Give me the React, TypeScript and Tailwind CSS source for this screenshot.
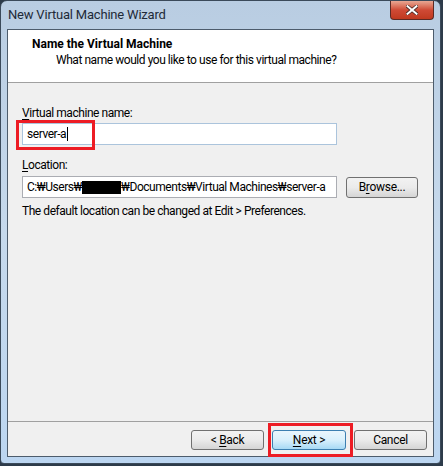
import React from "react"

const ui = { fontFamily: 'Roboto, "Noto Sans", sans-serif' }

function WinButton({ children, className = "" }: { children: React.ReactNode; className?: string }) {
    return (
        <div
            className={`flex items-center justify-center rounded-[3px] border border-[#707070] bg-gradient-to-b from-[#f2f2f2] via-[#ebebeb] to-[#d5d5d5] text-[12px] text-black tracking-[-0.3px] ${className}`}
        >
            {children}
        </div>
    )
}

export default function App() {
    return (
        <div className="w-[443px] h-[466px] overflow-hidden bg-[#2d3b4a]" style={ui}>
            {/* WINDOW FRAME */}
            <div className="w-[441px] h-[464px] rounded-t-[7px] rounded-b-[4px] border border-[#3b4a5a] bg-gradient-to-b from-[#b9cde2] via-[#c6d9ec] to-[#bcd6f1] flex flex-col px-[6px] pb-[6px]">
                {/* TITLE BAR */}
                <div className="h-[28px] flex items-start justify-between">
                    <span className="pl-[1px] pt-[6px] text-[13px] leading-[16px] text-[#1e2a38] tracking-[-0.2px]">
                        New Virtual Machine Wizard
                    </span>
                    <div className="w-[44px] h-[19px] rounded-b-[4px] border border-t-0 border-[#5b2a24] bg-gradient-to-b from-[#e8a793] via-[#cf4a35] to-[#c0391f] flex items-center justify-center">
                        <svg width="12" height="10" viewBox="0 0 12 10">
                            <path d="M1 1 L11 9 M11 1 L1 9" stroke="#4a2a25" strokeWidth="3.6" strokeLinecap="square" />
                            <path d="M1.5 1.2 L10.5 8.8 M10.5 1.2 L1.5 8.8" stroke="#ffffff" strokeWidth="2" strokeLinecap="square" />
                        </svg>
                    </div>
                </div>
                {/* CLIENT AREA */}
                <div className="flex-1 flex flex-col border border-[#4d5c6c] bg-[#f0f0f0]">
                    {/* HEADER */}
                    <div className="h-[53px] bg-white border-b border-[#a0a0a0] pl-[24px] pt-[6px]">
                        <p className="text-[12px] font-bold text-black leading-[16px]">Name the Virtual Machine</p>
                        <p className="pl-[24px] text-[12px] text-black leading-[17px] tracking-[-0.45px]">
                            What name would you like to use for this virtual machine?
                        </p>
                    </div>
                    {/* BODY */}
                    <div className="flex-1 flex flex-col pl-[14px] pt-[22px] text-[12px] text-black tracking-[-0.45px]">
                        <p className="leading-[16px]">
                            <span className="underline underline-offset-2">V</span>irtual machine name:
                        </p>
                        <div className="relative mt-[2px] w-[315px] h-[22px] border border-[#abc4dc] bg-white flex items-center pl-[4px]">
                            <span>server-a</span>
                            <span className="ml-[1px] w-px h-[14px] bg-black" />
                            <div className="absolute left-[-7px] top-[-4px] w-[79px] h-[30px] border-[3px] border-[#ed1c24]" />
                        </div>
                        <p className="mt-[12px] leading-[16px]">
                            <span className="underline underline-offset-2">L</span>ocation:
                        </p>
                        <div className="mt-[3px] flex items-center gap-[9px]">
                            <div className="w-[315px] h-[22px] border border-[#abadb3] bg-white flex items-center pl-[4px] whitespace-nowrap">
                                <span>C:₩Users₩</span>
                                <span className="w-[39px] h-[13px] bg-black" />
                                <span>₩Documents₩Virtual Machines₩server-a</span>
                            </div>
                            <WinButton className="w-[72px] h-[21px]">
                                <span>
                                    B<span className="underline underline-offset-2">r</span>owse...
                                </span>
                            </WinButton>
                        </div>
                        <p className="mt-[5px] leading-[16px]">The default location can be changed at Edit &gt; Preferences.</p>
                    </div>
                    {/* FOOTER */}
                    <div className="h-[35px] border-t border-[#a0a0a0] flex items-start justify-end pr-[6px] pt-[8px]">
                        <WinButton className="w-[73px] h-[20px]">
                            <span>
                                &lt; <span className="underline underline-offset-2">B</span>ack
                            </span>
                        </WinButton>
                        <div className="relative ml-[8px]">
                            <WinButton className="w-[74px] h-[20px] !border-[#3c7fb1] !from-[#eaf6fd] !via-[#d9f0fc] !to-[#a7d9f5]">
                                <span>
                                    <span className="underline underline-offset-2">N</span>ext &gt;
                                </span>
                            </WinButton>
                            <div className="absolute left-[-4px] top-[-7px] w-[85px] h-[34px] border-[3px] border-[#ed1c24]" />
                        </div>
                        <WinButton className="ml-[8px] w-[73px] h-[20px]">Cancel</WinButton>
                    </div>
                </div>
            </div>
        </div>
    )
}
